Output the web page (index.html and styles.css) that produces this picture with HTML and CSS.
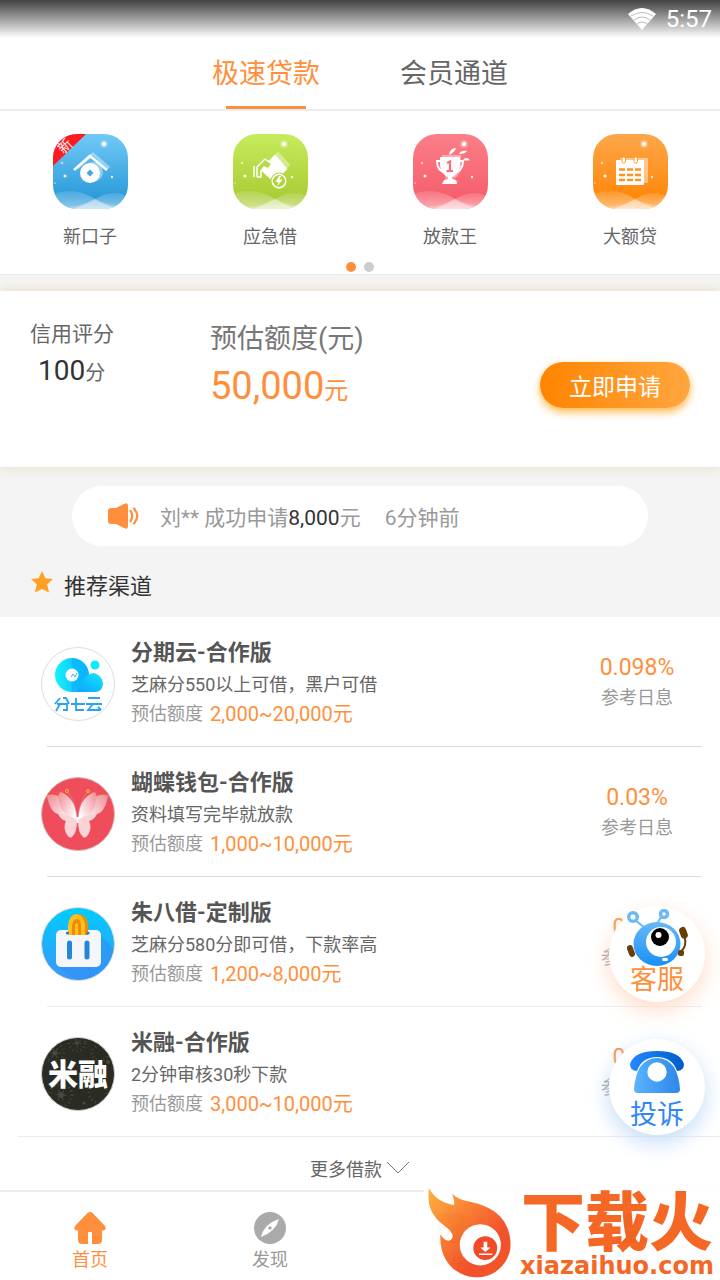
FILE: index.html
```html
<!DOCTYPE html>
<html lang="zh-CN">
<head>
<meta charset="utf-8">
<meta name="viewport" content="width=device-width, initial-scale=1">
<title>极速贷款</title>
<link rel="stylesheet" href="styles.css">
</head>
<body>
<svg class="defs" width="0" height="0" aria-hidden="true">
  <defs>
    <linearGradient id="blue" x1="0" y1="0" x2="0" y2="1"><stop offset="0" stop-color="#72c9f8"/><stop offset="1" stop-color="#1f93d3"/></linearGradient>
    <linearGradient id="green" x1="0" y1="0" x2="0" y2="1"><stop offset="0" stop-color="#c6ec5c"/><stop offset="1" stop-color="#a5c72f"/></linearGradient>
    <linearGradient id="pink" x1="0" y1="0" x2="0" y2="1"><stop offset="0" stop-color="#fb7e88"/><stop offset="1" stop-color="#f55a68"/></linearGradient>
    <linearGradient id="orange" x1="0" y1="0" x2="0" y2="1"><stop offset="0" stop-color="#fda74a"/><stop offset="1" stop-color="#ff8200"/></linearGradient>
    <linearGradient id="cyan" x1="0" y1="0" x2="1" y2="0"><stop offset="0" stop-color="#15f2fd"/><stop offset=".48" stop-color="#12d0ff"/><stop offset=".5" stop-color="#0bbcff"/><stop offset="1" stop-color="#0db4fb"/></linearGradient>
    <linearGradient id="cloud" x1="0" y1="1" x2="1" y2="0"><stop offset="0" stop-color="#0a9dfb"/><stop offset="1" stop-color="#16e6fd"/></linearGradient>
    <linearGradient id="sky" x1="0" y1="0" x2="0" y2="1"><stop offset="0" stop-color="#00ccff"/><stop offset="1" stop-color="#3a96fb"/></linearGradient>
    <linearGradient id="wing" x1="0" y1="0" x2="1" y2=".7"><stop offset="0" stop-color="#f08a94"/><stop offset="1" stop-color="#fff"/></linearGradient>
    <linearGradient id="robot" x1="0" y1="0" x2="0" y2="1"><stop offset="0" stop-color="#68b8fb"/><stop offset="1" stop-color="#1890f4"/></linearGradient>
    <linearGradient id="phone" x1="0" y1="0" x2="1" y2="0"><stop offset="0" stop-color="#5ab4ff"/><stop offset="1" stop-color="#2c87e8"/></linearGradient>
    <linearGradient id="handset" x1="0" y1="0" x2="1" y2="0"><stop offset="0" stop-color="#2289ff"/><stop offset="1" stop-color="#005ccc"/></linearGradient>
    <linearGradient id="flame" x1="0" y1="0" x2="1" y2="1"><stop offset="0" stop-color="#ffb03a"/><stop offset=".35" stop-color="#fa7c2c"/><stop offset=".7" stop-color="#f14a24"/><stop offset="1" stop-color="#f4521f"/></linearGradient>
    <linearGradient id="mist" x1="0" y1="0" x2="0" y2="1"><stop offset="0" stop-color="#fff" stop-opacity=".12"/><stop offset="1" stop-color="#fff" stop-opacity=".5"/></linearGradient>
    <clipPath id="tile"><rect width="75" height="75" rx="24"/></clipPath>
    <clipPath id="disc"><circle cx="37" cy="37" r="36"/></clipPath>
    <g id="scene" fill="#fff">
      <circle cx="51" cy="10" r="4" opacity=".25"/><circle cx="51" cy="10" r="2.200"/>
      <circle cx="9" cy="29" r="1.200" opacity=".6"/><circle cx="12" cy="42" r="1.500"/><circle cx="59" cy="43" r="1.200" opacity=".8"/><circle cx="2" cy="49" r=".8" opacity=".7"/>
      <path d="M0 60Q22 52 42 65Q55 73 68 75H0Z" fill="url(#mist)"/>
      <path d="M75 63Q60 54 42 65Q32 71 20 75H75Z" fill="url(#mist)"/>
      <path d="M0 75V73Q24 75 42 65Q58 73 75 71V75Z" opacity=".22"/>
    </g>
  </defs>
</svg>

<div class="app">
  <header class="top">
    <div class="status">
      <svg width="28" height="22" viewBox="0 0 28 22"><path d="M0 6Q14-6 28 6L14 22Z" fill="#fff"/><path d="M3 8Q14 1 25 8M6 12Q14 6 22 12M9 16Q14 12 19 16" fill="none" stroke="#aaa" stroke-width=".8"/></svg>
      <span>5:57</span>
    </div>
    <nav class="tabs">
      <a class="tab tab-active" href="#loan">极速贷款</a>
      <a class="tab" href="#member">会员通道</a>
    </nav>
  </header>

  <section class="shortcuts">
    <div class="shortcut-grid">
      <a class="shortcut" href="#new">
        <svg width="75" height="75" viewBox="0 0 75 75"><g clip-path="url(#tile)"><rect width="75" height="75" fill="url(#blue)"/><use href="#scene"/>
          <path d="M24 34L40 20L56 34" fill="none" stroke="#fff" stroke-width="3" opacity=".4"/><circle cx="40" cy="38" r="10" fill="#fff" opacity=".4"/>
          <path d="M21 36L37 22L54 36" fill="none" stroke="#fff" stroke-width="2.500"/><circle cx="37" cy="39" r="10" fill="#fff"/><path d="M37 35.500L40.500 39L37 42.500L33.500 39Z" fill="#40aadf"/>
          <path d="M0 0H33L0 32Z" fill="#ff1a1f"/><text class="ribbon" x="12" y="17" text-anchor="middle" transform="rotate(-44 12 12)">新</text></g></svg>
        <span>新口子</span>
      </a>
      <a class="shortcut" href="#urgent">
        <svg width="75" height="75" viewBox="0 0 75 75"><g clip-path="url(#tile)"><rect width="75" height="75" fill="url(#green)"/><use href="#scene"/>
          <path d="M45 19L56 31L43 44L31 32Z" fill="#fff" opacity=".4" stroke="#fff" stroke-width="2" stroke-linejoin="round"/>
          <path d="M42 22L53 35L41 47L29 36Z" fill="#fff" stroke="#fff" stroke-width="2" stroke-linejoin="round"/>
          <path d="M21 32V43M24 43V33L32 25L39 30L35 35L31 33L28 37V43H24" fill="#b7d945" stroke="#fff" stroke-width="1.500" stroke-linejoin="round"/>
          <circle cx="46" cy="47" r="8.500" fill="#b2d33e"/><circle cx="46" cy="47" r="6.800" fill="none" stroke="#fff" stroke-width="1.500"/><path d="M46 42L42.500 48H45.500L44.500 52L49.500 45.500H46.500L48 42Z" fill="#fff"/></g></svg>
        <span>应急借</span>
      </a>
      <a class="shortcut" href="#king">
        <svg width="75" height="75" viewBox="0 0 75 75"><g clip-path="url(#tile)"><rect width="75" height="75" fill="url(#pink)"/><use href="#scene"/>
          <path d="M29 21H48V36Q45 43 40 45L46 48H33Z" fill="#fff" opacity=".4"/>
          <path d="M27 23H47V32Q45 41 39 43V45L43 46L44 50H29L31 46L35 45V43Q29 41 27 32Z" fill="#fff"/>
          <path d="M27 27H24Q24 37 33 39M47 27H50Q50 37 41 39" fill="none" stroke="#fff" stroke-width="2"/>
          <path d="M34 29L37 27.500V37M33.500 37H40" fill="none" stroke="#f9707c" stroke-width="2.200"/>
          <path d="M36 21Q37 14 43 14Q42 18 36 21M46 20Q48 16 54 17Q52 20 46 20M50 26Q53 22 57 26Q53 27 50 26" fill="#fff"/></g></svg>
        <span>放款王</span>
      </a>
      <a class="shortcut" href="#large">
        <svg width="75" height="75" viewBox="0 0 75 75"><g clip-path="url(#tile)"><rect width="75" height="75" fill="url(#orange)"/><use href="#scene"/>
          <path d="M27 24H55V49H27Z" fill="#fff" opacity=".45"/><rect x="23" y="26" width="28" height="25" rx="1" fill="#fff"/>
          <rect x="29" y="23" width="3.500" height="6" rx="1.500" fill="#fff" stroke="#ff9928"/><rect x="41" y="23" width="3.500" height="6" rx="1.500" fill="#fff" stroke="#ff9928"/>
          <path d="M26 35.500H48M26 41H48M26 46H48" stroke="#ff9422" stroke-width="2.500" stroke-dasharray="6 2"/></g></svg>
        <span>大额贷</span>
      </a>
    </div>
    <div class="dots"><i class="dot dot-on"></i><i class="dot"></i></div>
  </section>

  <section class="credit">
    <div class="score"><p class="score-label">信用评分</p><p class="score-value"><b>100</b>分</p></div>
    <div class="quota"><p class="quota-label">预估额度(元)</p><p class="quota-value"><b>50,000</b>元</p></div>
    <button class="apply" type="button">立即申请</button>
  </section>

  <div class="notice">
    <svg width="32" height="26" viewBox="0 0 32 26"><path d="M3 5H8L16 1Q20-1 20 3V23Q20 27 16 25L8 21H3Q0 21 0 18V8Q0 5 3 5Z" fill="#ff8f3c"/><path d="M22.500 8Q26 13 22.500 18M26 5.500Q32.500 13 26 20.500" fill="none" stroke="#ff8f3c" stroke-width="2.200" stroke-linecap="round"/></svg>
    <span>刘** 成功申请<b>8,000</b>元</span><span>6分钟前</span>
  </div>

  <h2 class="heading">
    <svg width="22" height="22" viewBox="0 0 22 22"><path d="M11 0L14.300 7.200L22 8L16.200 13.300L18 21.500L11 18L4 21.500L5.800 13.300L0 8L7.700 7.200Z" fill="#ffa022"/></svg>
    <span>推荐渠道</span>
  </h2>

  <ul class="list">
    <li class="item">
      <svg class="logo" width="74" height="74" viewBox="0 0 74 74"><circle cx="37" cy="37" r="36.500" fill="#fff" stroke="#ddd"/>
        <path d="M31 11A17 17 0 1 0 31 45A17 17 0 1 0 31 11" fill="url(#cyan)"/><path d="M31 45Q39 45 41 36Q45 26 53 26Q62 29 62 37Q61 45 54 45Z" fill="url(#cloud)"/><circle cx="54" cy="18" r="4.500" fill="#14eafd"/><circle cx="31" cy="28" r="6.500" fill="#fff"/><path d="M30 30L32 27L34 30L36 26" fill="none" stroke="#23bbe8"/>
        <g fill="none" stroke="#2aa2f7" stroke-width="1.800"><path d="M19 51L14 57M22 51H25L28 57M16 57H26V63H22M19 57L15 64M30 57H44M35 51V63H43M47 51H59M45 57H61M52 57L47 63H60M57 60L60 63"/></g></svg>
      <div class="info"><h3>分期云-合作版</h3><p class="desc">芝麻分550以上可借，黑户可借</p><p class="range">预估额度<b>2,000~20,000元</b></p></div>
      <div class="rate"><b>0.098%</b><span>参考日息</span></div>
    </li>
    <li class="item">
      <svg class="logo" width="74" height="74" viewBox="0 0 74 74"><circle cx="37" cy="37" r="36.500" fill="#ef4d5b" stroke="#d8b9bc"/>
        <g id="half"><path d="M36 43Q28 24 17 19Q8 17 6 19Q9 35 17 37Q26 39 36 43Z" fill="url(#wing)"/><path d="M36 44Q36 22 20 15Q16 16 18 24Q20 38 36 44Z" fill="url(#wing)"/><path d="M36 43C30 39 21 36 17 37Q20 43 25 44Q22 50 25 56Q28 62 31 60Q36 56 36 43Z" fill="#f9d3d6"/><path d="M6 19Q14 16 21 22" fill="none" stroke="#ecb15d" stroke-width=".8"/><path d="M36 40Q34 24 27 15" fill="none" stroke="#d9868a" stroke-width=".7"/><circle cx="26" cy="14" r="1.500" fill="none" stroke="#ffb82f"/></g>
        <use href="#half" transform="translate(73 0) scale(-1 1)"/><rect x="35.500" y="40" width="2" height="6" rx="1" fill="#fff"/></svg>
      <div class="info"><h3>蝴蝶钱包-合作版</h3><p class="desc">资料填写完毕就放款</p><p class="range">预估额度<b>1,000~10,000元</b></p></div>
      <div class="rate"><b>0.03%</b><span>参考日息</span></div>
    </li>
    <li class="item item-light">
      <svg class="logo" width="74" height="74" viewBox="0 0 74 74"><circle cx="37" cy="37" r="36.500" fill="url(#sky)" stroke="#ddd"/><g clip-path="url(#disc)"><path d="M56 25L76 45V76H40L18 60Z" fill="#2f8df0" opacity=".5"/></g>
        <rect x="15" y="23" width="45" height="37" rx="5" fill="#f5f6fa"/>
        <path d="M31 28V19Q31 7 38 7Q47 8 47 20V28Z" fill="#f28c00"/><path d="M27 28V19Q28 7 36 7Q44 9 44 20V28Z" fill="#ffc01d"/><path d="M31 28V19Q32 12 35.500 12Q40 12 40 19V28Z" fill="#f08a08"/><path d="M34 28V18Q35.500 14 37 18V28Z" fill="#ffc01d"/>
        <path d="M25 28H48V32H25Z" fill="#f5f6fa"/><circle cx="26.500" cy="26" r="1.600" fill="#237ec4"/><circle cx="47" cy="26" r="1.600" fill="#237ec4"/>
        <path d="M28.500 36V50M46 36V50" stroke="#2387d9" stroke-width="5" stroke-linecap="round"/></svg>
      <div class="info"><h3>朱八借-定制版</h3><p class="desc">芝麻分580分即可借，下款率高</p><p class="range">预估额度<b>1,200~8,000元</b></p></div>
      <div class="rate"><b>0.1%</b><span>参考日息</span></div>
    </li>
    <li class="item item-last">
      <svg class="logo" width="74" height="74" viewBox="0 0 74 74"><circle cx="37" cy="37" r="36.500" fill="#2a2b22" stroke="#ccc"/>
        <g clip-path="url(#disc)"><g fill="none" stroke="#45463d" stroke-width="3" stroke-dasharray="1 3"><circle cx="36" cy="6" r="3"/><circle cx="36" cy="6" r="8"/><circle cx="14" cy="16" r="4"/><circle cx="14" cy="16" r="9"/><circle cx="20" cy="58" r="4"/><circle cx="20" cy="58" r="11"/><circle cx="57" cy="56" r="9"/><circle cx="59" cy="16" r="8"/></g>
        <g fill="#484940"><circle cx="36" cy="6" r="2"/><circle cx="14" cy="16" r="2.500"/><circle cx="20" cy="58" r="3"/><circle cx="67" cy="25" r="2"/><circle cx="43" cy="66" r="1.500"/></g></g>
        <text class="logo-text" x="37" y="48" text-anchor="middle">米融</text></svg>
      <div class="info"><h3>米融-合作版</h3><p class="desc">2分钟审核30秒下款</p><p class="range">预估额度<b>3,000~10,000元</b></p></div>
      <div class="rate"><b>0.1%</b><span>参考日息</span></div>
    </li>
  </ul>

  <a class="more" href="#more">更多借款<svg width="24" height="14" viewBox="0 0 24 14"><path d="M1 1L12 12L23 1" fill="none" stroke="#777"/></svg></a>

  <footer class="bottom">
    <nav class="menu">
      <a class="menu-item menu-active" href="#home"><svg width="34" height="34" viewBox="0 0 34 34"><path d="M14.500 2Q17 0 19.500 2L32 15Q34 19 30 19.500H29V29Q29 33 25 33H19V21H15V33H9Q5 33 5 29V19.500H4Q0 19 2 15Z" fill="#ff8f3c"/></svg><span>首页</span></a>
      <a class="menu-item" href="#discover"><svg width="34" height="34" viewBox="0 0 34 34"><circle cx="17" cy="17" r="16" fill="#aaa"/><path d="M26 8Q23 20 8 26Q11 13 26 8" fill="#fff"/><circle cx="17" cy="17" r="1.700" fill="#aaa"/></svg><span>发现</span></a>
      <a class="menu-item" href="#bill"><svg width="34" height="34" viewBox="0 0 34 34"><rect x="4" y="2" width="27" height="30" rx="3" fill="#aaa"/><path d="M11 9L17 15L24 9M11 20L17 26L24 20" fill="none" stroke="#fff" stroke-width="2"/></svg><span>账单</span></a>
      <a class="menu-item" href="#mine"><svg width="34" height="34" viewBox="0 0 34 34"><circle cx="17" cy="10" r="8" fill="#aaa"/><path d="M2 32Q2 20 17 20T32 32Z" fill="#aaa"/></svg><span>我的</span></a>
    </nav>
    <div class="brand">
      <svg width="90" height="93" viewBox="40 40 270 280"><path d="M54 50C75 85 100 95 130 101C132 88 128 78 124 66C150 93 190 85 235 110C285 135 305 185 299 235C287 292 240 319 195 318C137 315 84 270 89 188C100 212 125 214 126 193C122 172 97 163 78 142C50 110 52 82 54 50Z" fill="url(#flame)"/><circle cx="209" cy="220" r="62" fill="#fff"/><circle cx="224" cy="230" r="36" fill="#f0431f"/><path d="M219 211H230V228H240L224 242L209 228H219ZM205 246H245V251H205Z" fill="#fff"/></svg>
      <div class="brand-text"><strong>下载火</strong><span>xiazaihuo.com</span></div>
    </div>
  </footer>

  <a class="float float-service" href="#service"><svg width="62" height="58" viewBox="0 0 62 58"><g fill="none" stroke="#6bb9f5" stroke-width="3.500"><circle cx="7" cy="8" r="4.300"/><circle cx="38" cy="5" r="3.500"/></g><path d="M10 12L18 18M35 8L31 15" stroke="#6bb9f5" stroke-width="2"/><ellipse cx="31" cy="35" rx="23.500" ry="22" fill="url(#robot)"/><circle cx="35" cy="33" r="15" fill="#fff"/><circle cx="34" cy="28" r="9" fill="#000"/><circle cx="32.500" cy="26" r="3" fill="#fff"/><rect x="36" y="49" width="6" height="3" rx="1.500" fill="#fff"/><path d="M58 25Q62 38 54 43" fill="none" stroke="#6a3c08" stroke-width="2"/><g fill="#693d08"><rect x="54" y="18" width="7" height="12" rx="3.500" transform="rotate(-20 57 24)"/><rect x="52" y="41" width="6" height="6" rx="2"/><rect x="2" y="36" width="6" height="12" rx="3" transform="rotate(-20 5 42)"/></g></svg><span>客服</span></a>
  <a class="float float-complaint" href="#complaint"><svg width="54" height="43" viewBox="0 0 54 43"><path d="M10 16Q17 7 27 7T44 16Q49 25 50 38Q50 42 46 42H8Q4 42 4 38Q5 25 10 16Z" fill="url(#phone)"/><path d="M7 20Q0 20 0 13Q4 0 27 0T54 13Q54 20 47 20Q42 6 27 6T7 20" fill="url(#handset)"/><circle cx="27" cy="21" r="9.700" fill="#fff"/></svg><span>投诉</span></a>
</div>
</body>
</html>
```
FILE: styles.css
```css
* { box-sizing: border-box; }
body {
  margin: 0;
  background: #f4f4f4;
  color: #666;
  font-family: Roboto, "Noto Sans CJK SC", sans-serif;
  font-size: 18px;
}
p, h2, h3, ul { margin: 0; padding: 0; }
b { font-weight: 400; }
a { color: inherit; text-decoration: none; }
svg { flex: none; display: block; }
.defs { position: absolute; }
.app {
  position: relative;
  display: flex;
  flex-direction: column;
  min-height: 100vh;
}

.top { background: #fff; border-bottom: 2px solid #ececec; }
.status {
  display: flex;
  align-items: center;
  justify-content: flex-end;
  gap: 10px;
  height: 38px;
  padding-right: 8px;
  background: linear-gradient(#444, #666 20%, #fff);
  color: #fff;
  font-size: 24px;
}
.tabs { display: flex; justify-content: center; gap: 80px; }
.tab {
  display: flex;
  flex-direction: column;
  align-items: center;
  height: 71px;
  padding-top: 4px;
  font-size: 27px;
  line-height: 64px;
}
.tab-active { color: #ff8f3c; }
.tab-active::after { content: ""; width: 80px; height: 3px; flex: none; background: #ff8f3c; }

.shortcuts {
  padding: 23px 0 2px;
  background: #fff;
  border-bottom: 1px solid #e8e8e8;
}
.shortcut-grid { display: grid; grid-template-columns: repeat(4, 1fr); }
.shortcut {
  display: flex;
  flex-direction: column;
  align-items: center;
  gap: 16px;
  line-height: 24px;
}
.ribbon { fill: #fff; font-size: 14px; }
.dots { display: flex; justify-content: center; gap: 8px; margin-top: 13px; }
.dot { width: 10px; height: 10px; border-radius: 50%; background: #ccc; }
.dot-on { background: #ff8f3c; }

.credit {
  display: grid;
  grid-template-columns: 180px 1fr auto;
  align-items: start;
  margin-top: 16px;
  padding: 27px 30px 51px;
  background: #fff;
  box-shadow: 0 0 12px #e8dcc4;
}
.score-label { font-size: 21px; line-height: 32px; }
.score-value { padding-left: 8px; font-size: 20px; line-height: 42px; }
.score-value b { color: #333; font-size: 28px; }
.quota-label { color: #777; font-size: 27px; line-height: 43px; }
.quota-value { color: #ff8f3c; font-size: 24px; line-height: 50px; }
.quota-value b { font-size: 38px; }
.apply {
  width: 150px;
  height: 46px;
  margin-top: 44px;
  padding: 0;
  border: 0;
  border-radius: 23px;
  background: linear-gradient(90deg, #ff8400, #ffa640);
  box-shadow: 0 4px 8px #ffb84d;
  color: #fff;
  font: inherit;
  font-size: 23px;
}

.notice {
  display: flex;
  align-items: center;
  gap: 24px;
  height: 60px;
  margin: 19px 10% 0;
  padding: 0 36px;
  border-radius: 30px;
  background: #fff;
  color: #999;
  font-size: 21px;
}
.notice svg { margin-right: -4px; }
.notice b { color: #333; }
.heading {
  display: flex;
  align-items: center;
  gap: 11px;
  height: 71px;
  padding: 0 31px;
  color: #333;
  font-size: 22px;
  font-weight: 400;
}
.heading span { padding-top: 4px; }

.list { background: #fff; list-style: none; }
.item {
  display: flex;
  align-items: center;
  gap: 16px;
  height: 130px;
  padding: 0 0 1px 41px;
  background: linear-gradient(#dcdcdc, #dcdcdc) 47px 100% / calc(100% - 65px) 1px no-repeat;
}
.item-light { background-image: linear-gradient(#ececec, #ececec); }
.item-last {
  background-image: linear-gradient(#ececec, #ececec);
  background-position: 18px 100%;
  background-size: calc(100% - 18px) 1px;
}
.logo { margin-top: 4px; }
.logo-text { fill: #fff; font-size: 30px; font-weight: 900; }
.info { flex: 1; }
.info h3 { color: #555; font-size: 22px; font-weight: 700; line-height: 32px; }
.desc { line-height: 32px; }
.range { display: flex; gap: 7px; color: #999; line-height: 26px; }
.range b { color: #ff8f3c; font-size: 20px; }
.rate {
  display: flex;
  flex-direction: column;
  align-items: center;
  width: 166px;
  padding-top: 2px;
  color: #999;
  line-height: 30px;
}
.rate b { color: #ff8f3c; font-size: 23px; }

.more {
  display: flex;
  justify-content: center;
  align-items: center;
  gap: 4px;
  height: 53px;
  padding-top: 9px;
  background: #fff;
}
.bottom { position: relative; margin-top: auto; background: #fff; border-top: 2px solid #ececec; }
.menu { display: grid; grid-template-columns: repeat(4, 1fr); height: 88px; padding-top: 19px; }
.menu-item {
  display: flex;
  flex-direction: column;
  align-items: center;
  gap: 2px;
  color: #999;
  line-height: 26px;
}
.menu-active { color: #ff8f3c; }
.brand {
  position: absolute;
  right: 0;
  bottom: 0;
  display: flex;
  align-items: flex-end;
  width: 296px;
  height: 96px;
  padding-bottom: 2px;
  background: #fff;
  opacity: .96;
}
.brand-text {
  display: flex;
  flex-direction: column;
  align-items: center;
  flex: 1;
  color: #f4611c;
}
.brand strong { font-size: 64px; font-weight: 900; line-height: 60px; }
.brand span { font-family: "DejaVu Sans", sans-serif; font-size: 24px; font-weight: 700; line-height: 24px; }

.float {
  position: absolute;
  right: 15px;
  display: flex;
  flex-direction: column;
  align-items: center;
  justify-content: flex-end;
  width: 96px;
  height: 96px;
  border-radius: 50%;
  background: #fff;
  font-size: 27px;
}
.float span { line-height: 30px; }
.float-service { bottom: 278px; padding-bottom: 7px; color: #ff8f3c; box-shadow: 0 8px 22px #ffdcc8; }
.float-service svg { margin-bottom: -2px; }
.float-complaint { bottom: 145px; padding-bottom: 5px; color: #2f86f6; box-shadow: 0 8px 22px #c4dcf8; }
.float-complaint svg { margin-bottom: 6px; }
```
